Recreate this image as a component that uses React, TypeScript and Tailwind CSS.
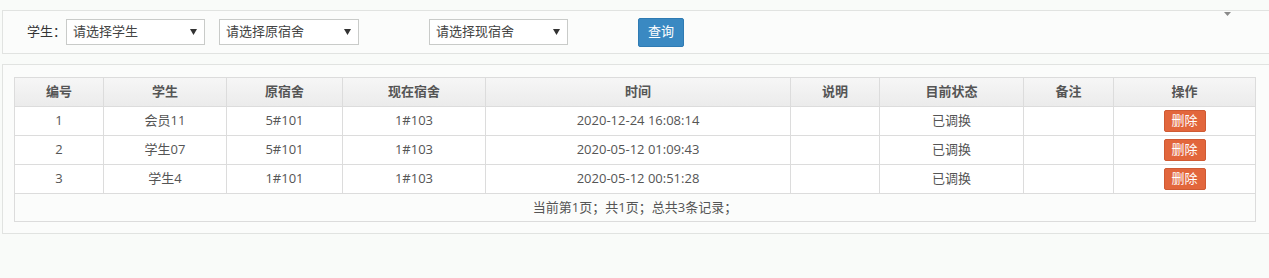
import React from "react";

const font = {
  fontFamily: '"Open Sans", "Noto Sans CJK SC", sans-serif',
};

function FakeSelect({ text, w }: { text: string; w: string }) {
  return (
    <div
      className={`${w} h-[26px] bg-white border border-[#c9cbc9] flex items-center justify-between pl-[6px] pr-[7px] text-[13px] text-[#444]`}
    >
      <span>{text}</span>
      <svg width="7" height="6" viewBox="0 0 7 6">
        <polygon points="0,0 7,0 3.5,6" fill="#333" />
      </svg>
    </div>
  );
}

const cols = [89, 123, 116, 143, 305, 89, 144, 90, 142];
const headers = ["编号", "学生", "原宿舍", "现在宿舍", "时间", "说明", "目前状态", "备注", "操作"];
const rows = [
  ["1", "会员11", "5#101", "1#103", "2020-12-24 16:08:14", "", "已调换", ""],
  ["2", "学生07", "5#101", "1#103", "2020-05-12 01:09:43", "", "已调换", ""],
  ["3", "学生4", "1#101", "1#103", "2020-05-12 00:51:28", "", "已调换", ""],
];

export default function App() {
  return (
    <div className="w-[1269px] h-[278px] bg-[#f9fbf9] overflow-hidden pt-[10px] pl-[2px] relative" style={font}>
      <div className="absolute left-[1224px] top-[12px]">
        <svg width="7" height="4" viewBox="0 0 7 4">
          <polygon points="0,0 7,0 3.5,4" fill="#8a8a8a" />
        </svg>
      </div>
      <div className="w-[1280px] h-[44px] border border-r-0 border-[#e1e3e1] bg-[#fbfcfb] flex items-center pl-[24px]">
        <span className="text-[13px] text-[#333] w-[39px]">学生：</span>
        <FakeSelect text="请选择学生" w="w-[139px]" />
        <div className="w-[14px]" />
        <FakeSelect text="请选择原宿舍" w="w-[140px]" />
        <div className="w-[70px]" />
        <FakeSelect text="请选择现宿舍" w="w-[139px]" />
        <div className="w-[70px]" />
        <div className="w-[46px] h-[29px] bg-[#3a89c2] border border-[#2f7bb3] rounded-[2px] flex items-center justify-center text-white text-[13px]">
          查询
        </div>
      </div>
      <div className="mt-[10px] w-[1280px] h-[170px] border border-r-0 border-[#e1e3e1] bg-[#fbfcfb] pl-[11px] pt-[12px]">
        <table className="border-collapse text-[13px] text-[#555] bg-white" style={{ width: 1242, tableLayout: "fixed" }}>
          <colgroup>
            {cols.map((c, i) => (
              <col key={i} style={{ width: c }} />
            ))}
          </colgroup>
          <thead>
            <tr className="h-[29px] bg-gradient-to-b from-[#f6f6f6] to-[#ebebeb]">
              {headers.map((h) => (
                <th key={h} className="border border-[#dcdcdc] font-semibold text-[#555] text-center p-0">
                  {h}
                </th>
              ))}
            </tr>
          </thead>
          <tbody>
            {rows.map((r, i) => (
              <tr key={i} className="h-[29px]">
                {r.map((c, j) => (
                  <td key={j} className="border border-[#dcdcdc] text-center p-0">
                    {c}
                  </td>
                ))}
                <td className="border border-[#dcdcdc] text-center p-0">
                  <div className="flex justify-center">
                    <div className="w-[42px] h-[22px] bg-[#e2663c] border border-[#cf5a33] rounded-[2px] text-white text-[13px] flex items-center justify-center">
                      删除
                    </div>
                  </div>
                </td>
              </tr>
            ))}
            <tr className="h-[28px]">
              <td colSpan={9} className="border border-[#dcdcdc] text-center p-0 bg-[#fbfcfb]">
                当前第1页；共1页；总共3条记录；
              </td>
            </tr>
          </tbody>
        </table>
      </div>
    </div>
  );
}
